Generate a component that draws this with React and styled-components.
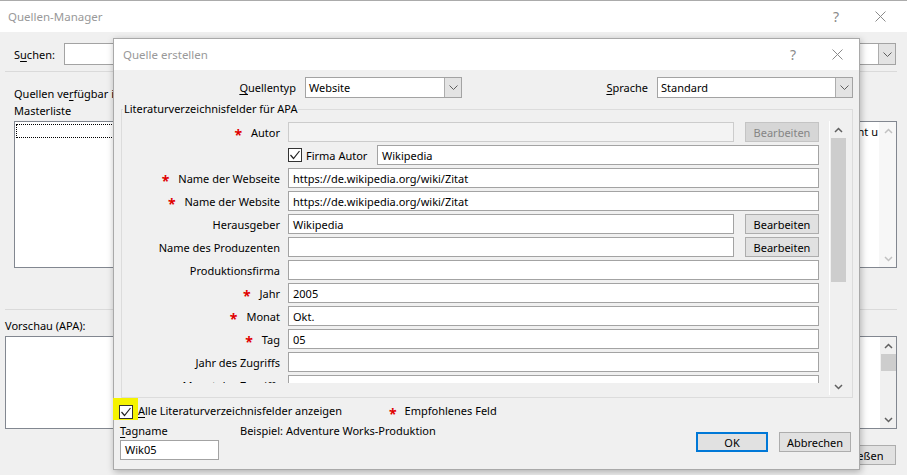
import styled, { createGlobalStyle } from 'styled-components';

const GlobalStyle = createGlobalStyle`
  * {
    box-sizing: border-box;
  }

  html, body {
    margin: 0;
    padding: 0;
    background: #f0f0f0;
    overflow: hidden;
  }

  body {
    font-family: "Noto Sans", "DejaVu Sans", sans-serif;
    font-size: 11px;
    color: #000;
  }
`;

const Desktop = styled.div`
  position: relative;
  width: 907px;
  height: 475px;
  overflow: hidden;
`;

// ---- window chrome ----

const TitleBar = styled.div`
  display: flex;
  align-items: center;
  height: 31px;
  padding: 0 ${(props) => props.$right}px 0 ${(props) => props.$inset}px;
  background: #fff;
`;

const WindowTitle = styled.div`
  flex: 1;
  font-size: 11.5px;
  color: #999;
`;

const CaptionButton = styled.div`
  display: flex;
  align-items: center;
  justify-content: center;
  width: 44px;
  height: 31px;
  font-size: 14px;
  color: #8a8a8a;
`;

function Caption({ title, inset, right }) {
  return (
    <TitleBar $inset={inset} $right={right}>
      <WindowTitle>{title}</WindowTitle>
      <CaptionButton>?</CaptionButton>
      <CaptionButton>
        <svg width="11" height="11" viewBox="0 0 11 11">
          <path d="M0.5 0.5 L10.5 10.5 M10.5 0.5 L0.5 10.5" stroke="#8a8a8a" strokeWidth="1" />
        </svg>
      </CaptionButton>
    </TitleBar>
  );
}

// ---- shared controls ----

const Key = styled.span`
  text-decoration: underline;
  text-underline-offset: 2px;
`;

const TextBox = styled.div`
  display: flex;
  align-items: center;
  flex: ${(props) => (props.$width ? 'none' : 1)};
  width: ${(props) => (props.$width ? `${props.$width}px` : 'auto')};
  height: ${(props) => props.$height || 20}px;
  padding: 0 4px;
  background: ${(props) => (props.$disabled ? '#f3f3f3' : '#fff')};
  border: 1px solid ${(props) => (props.$disabled ? '#cccccc' : '#a3a3a3')};
  white-space: nowrap;
  overflow: hidden;
`;

const PushButton = styled.div`
  display: flex;
  align-items: center;
  justify-content: center;
  flex: none;
  width: ${(props) => props.$width || 74}px;
  height: 20px;
  background: ${(props) => (props.$disabled ? '#d6d6d6' : '#e1e1e1')};
  border: ${(props) => (props.$default ? '2px solid #0078d7' : `1px solid ${props.$disabled ? '#c4c4c4' : '#adadad'}`)};
  color: ${(props) => (props.$disabled ? '#858585' : '#000')};
  white-space: nowrap;
`;

const EditButton = styled(PushButton)`
  margin-left: 11px;
`;

const ComboField = styled.div`
  display: flex;
  align-items: stretch;
  flex: ${(props) => (props.$width ? 'none' : 1)};
  width: ${(props) => (props.$width ? `${props.$width}px` : 'auto')};
  height: ${(props) => props.$height || 21}px;
  background: #fff;
  border: 1px solid #a3a3a3;
`;

const ComboText = styled.div`
  display: flex;
  align-items: center;
  flex: 1;
  padding-left: 3px;
`;

const ComboArrow = styled.div`
  display: flex;
  align-items: center;
  justify-content: center;
  width: 17px;
  background: #e3e3e3;
  border-left: 1px solid #adadad;
`;

function Chevron() {
  return (
    <svg width="9" height="5" viewBox="0 0 9 5">
      <polyline points="0.5,0.5 4.5,4.5 8.5,0.5" fill="none" stroke="#5d5d5d" strokeWidth="1" />
    </svg>
  );
}

function Combo({ value, width, height }) {
  return (
    <ComboField $width={width} $height={height}>
      <ComboText>{value}</ComboText>
      <ComboArrow>
        <Chevron />
      </ComboArrow>
    </ComboField>
  );
}

const CheckBox = styled.span`
  display: flex;
  align-items: center;
  justify-content: center;
  flex: none;
  width: 14px;
  height: 14px;
  background: #fff;
  border: 1px solid #333;
`;

function Checked() {
  return (
    <CheckBox>
      <svg width="12" height="12" viewBox="0 0 12 12">
        <polyline points="1.5,6 4.5,9.5 10.5,2" fill="none" stroke="#222" strokeWidth="1.2" />
      </svg>
    </CheckBox>
  );
}

const ScrollBar = styled.div`
  display: flex;
  flex-direction: column;
  align-items: center;
  flex: none;
  width: 17px;
  height: ${(props) => (props.$height ? `${props.$height}px` : 'auto')};
  background: ${(props) => (props.$disabled ? '#f7f7f7' : '#f0f0f0')};
  border-left: 1px solid ${(props) => (props.$disabled ? '#f7f7f7' : '#fff')};
`;

const ArrowCell = styled.div`
  display: flex;
  align-items: center;
  justify-content: center;
  width: 100%;
  height: 17px;
  flex: none;
`;

const Thumb = styled.div`
  width: 15px;
  height: ${(props) => props.$size}px;
  background: #cdcdcd;
  flex: none;
`;

const Track = styled.div`
  flex: 1;
`;

function Arrow({ down, light }) {
  return (
    <ArrowCell>
      <svg width="9" height="6" viewBox="0 0 9 6">
        <polyline
          points={down ? '1,1 4.5,4.5 8,1' : '1,5 4.5,1.5 8,5'}
          fill="none"
          stroke={light ? '#c2c2c2' : '#606060'}
          strokeWidth="1.5"
        />
      </svg>
    </ArrowCell>
  );
}

// ---- Quellen-Manager (background window) ----

const ManagerWindow = styled.div`
  display: flex;
  flex-direction: column;
  height: 475px;
  border-top: 1px solid #ababab;
`;

const ManagerBody = styled.div`
  display: flex;
  flex-direction: column;
  flex: 1;
  padding: 0 10px 0 5px;
`;

const SearchRow = styled.div`
  display: flex;
  align-items: center;
  margin-top: 11px;
  padding: 0 1px 0 9px;
`;

const SearchLabel = styled.div`
  width: 50px;
`;

const Divider = styled.div`
  height: 1px;
  margin-top: ${(props) => props.$gap}px;
  background: #dadada;
`;

const ListsArea = styled.div`
  display: grid;
  grid-template-columns: 1fr 1fr;
  grid-template-rows: 34px 147px;
  column-gap: 40px;
  row-gap: 2px;
  margin-top: 13px;
  padding-left: 9px;
  line-height: 17px;
`;

const ListBox = styled.div`
  display: flex;
  background: #fff;
  border: 1px solid #828790;
  overflow: hidden;
`;

const ListItems = styled.div`
  flex: 1;
  min-width: 0;
  padding: 2px 1px;
`;

const FocusItem = styled.div`
  height: 14px;
  border: 1px dotted #000;
`;

const SourceItem = styled.div`
  display: flex;
  justify-content: flex-end;
  white-space: nowrap;
  line-height: 16px;
`;

const PreviewLabel = styled.div`
  margin-top: 7px;
  line-height: 17px;
`;

const PreviewBox = styled.div`
  display: flex;
  justify-content: flex-end;
  height: 93px;
  margin-top: 2px;
  background: #fff;
  border: 1px solid #828790;
`;

const ManagerFooter = styled.div`
  display: flex;
  justify-content: flex-end;
  margin-top: 16px;
  padding-right: 1px;
`;

// ---- Quelle erstellen (dialog) ----

const Dialog = styled.div`
  position: absolute;
  left: 113px;
  top: 38px;
  display: flex;
  flex-direction: column;
  width: 747px;
  height: 432px;
  background: #f0f0f0;
  border: 1px solid #a9a9a9;
  box-shadow: 1px 2px 7px rgba(0, 0, 0, 0.28);
`;

const TopRow = styled.div`
  display: flex;
  align-items: center;
  margin-top: 7px;
  padding-right: 6px;
`;

const TopLabel = styled.div`
  width: ${(props) => props.$width}px;
  margin-right: 9px;
  text-align: right;
`;

const Spacer = styled.div`
  flex: 1;
`;

const FieldGroup = styled.fieldset`
  min-width: 0;
  margin: 3px 6px 0 7px;
  padding: 0 6px 2px 0;
  border: 1px solid #dcdcdc;
`;

const Legend = styled.legend`
  margin-left: 1px;
  padding: 0 1px;
  line-height: 16px;
`;

const PaneWrap = styled.div`
  display: flex;
  align-items: flex-start;
  margin-top: 4px;
`;

const RowsPane = styled.div`
  display: flex;
  flex-direction: column;
  gap: 3px;
  flex: 1;
  height: 262px;
  padding: 1px 10px 0 0;
  overflow: hidden;
`;

const FieldRow = styled.div`
  display: flex;
  align-items: center;
  flex: none;
  height: 20px;
`;

const FieldLabel = styled.div`
  display: flex;
  align-items: center;
  justify-content: flex-end;
  flex: none;
  width: 158px;
  margin-right: 8px;
  white-space: nowrap;
`;

const Star = styled.span`
  display: inline-flex;
  align-items: center;
  height: 16px;
  padding-top: 5px;
  margin-right: ${(props) => props.$gap || 9}px;
  color: #e00000;
  font-size: 14px;
  font-weight: 700;
  line-height: 16px;
`;

const InlineCheck = styled.label`
  display: flex;
  align-items: center;
  gap: 4px;
  flex: none;
  width: 89px;
`;

const CheckRow = styled.div`
  display: flex;
  align-items: flex-end;
  margin-left: -1px;
`;

const Highlight = styled.div`
  flex: none;
  padding: 7px 5px 1px 6px;
  background: #f5f300;
`;

const AllFields = styled.div`
  width: 251px;
  line-height: 16px;
  padding-bottom: 1px;
`;

const Hint = styled.div`
  display: flex;
  align-items: center;
  line-height: 16px;
  padding-bottom: 1px;
`;

const FooterRow = styled.div`
  display: flex;
  align-items: flex-start;
  padding: 3px 8px 0 6px;
`;

const TagColumn = styled.div`
  display: flex;
  flex-direction: column;
  gap: 1px;
  width: 120px;
  line-height: 16px;
`;

const Example = styled.div`
  line-height: 16px;
`;

const DialogButtons = styled.div`
  display: flex;
  gap: 11px;
  margin: 9px 0 0 auto;
`;

const fields = [
  { label: 'Name der Webseite', star: true, value: 'https://de.wikipedia.org/wiki/Zitat' },
  { label: 'Name der Website', star: true, value: 'https://de.wikipedia.org/wiki/Zitat' },
  { label: 'Herausgeber', value: 'Wikipedia', edit: true },
  { label: 'Name des Produzenten', value: '', edit: true },
  { label: 'Produktionsfirma', value: '' },
  { label: 'Jahr', star: true, value: '2005' },
  { label: 'Monat', star: true, value: 'Okt.' },
  { label: 'Tag', star: true, value: '05' },
  { label: 'Jahr des Zugriffs', value: '' },
  { label: 'Monat des Zugriffs', value: '' },
  { label: 'Tag des Zugriffs', value: '' },
];

function Field({ label, star, value, edit, disabled }) {
  return (
    <FieldRow>
      <FieldLabel>
        {star && <Star>*</Star>}
        {label}
      </FieldLabel>
      <TextBox $disabled={disabled}>{value}</TextBox>
      {edit && <EditButton $disabled={disabled}>Bearbeiten</EditButton>}
    </FieldRow>
  );
}

export default function App() {
  return (
    <Desktop>
      <GlobalStyle />
      <ManagerWindow>
        <Caption title="Quellen-Manager" inset={8} right={5} />
        <ManagerBody>
          <SearchRow>
            <SearchLabel>
              S<Key>u</Key>chen:
            </SearchLabel>
            <TextBox $width={400} $height={22} />
            <Spacer />
            <Combo value="" width={420} height={22} />
          </SearchRow>
          <Divider $gap={6} />
          <ListsArea>
            <div>
              Quellen ve<Key>r</Key>fügbar in:
              <br />
              Masterliste
            </div>
            <div>Aktuelle Liste</div>
            <ListBox>
              <ListItems>
                <FocusItem />
              </ListItems>
            </ListBox>
            <ListBox>
              <ListItems>
                <SourceItem>Wikipedia; Zitat (2005) – nicht u</SourceItem>
              </ListItems>
              <ScrollBar $disabled>
                <Arrow light />
                <Track />
                <Arrow down light />
              </ScrollBar>
            </ListBox>
          </ListsArea>
          <Divider $gap={41} />
          <PreviewLabel>Vorschau (APA):</PreviewLabel>
          <PreviewBox>
            <ScrollBar>
              <Arrow />
              <Thumb $size={17} />
              <Track />
              <Arrow down />
            </ScrollBar>
          </PreviewBox>
          <ManagerFooter>
            <PushButton $width={75}>Schließen</PushButton>
          </ManagerFooter>
        </ManagerBody>
      </ManagerWindow>

      <Dialog>
        <Caption title="Quelle erstellen" inset={9} right={0} />
        <TopRow>
          <TopLabel $width={182}>
            <Key>Q</Key>uellentyp
          </TopLabel>
          <Combo value="Website" width={157} />
          <Spacer />
          <TopLabel $width={42}>
            <Key>S</Key>prache
          </TopLabel>
          <Combo value="Standard" width={196} />
        </TopRow>

        <FieldGroup>
          <Legend>Literaturverzeichnisfelder für APA</Legend>
          <PaneWrap>
            <RowsPane>
              <Field label="Autor" star value="" edit disabled />
              <FieldRow>
                <FieldLabel />
                <InlineCheck>
                  <Checked />
                  Firma Autor
                </InlineCheck>
                <TextBox>Wikipedia</TextBox>
              </FieldRow>
              {fields.map((f) => (
                <Field key={f.label} {...f} />
              ))}
            </RowsPane>
            <ScrollBar $height={274}>
              <Arrow />
              <Thumb $size={144} />
              <Track />
              <Arrow down />
            </ScrollBar>
          </PaneWrap>
        </FieldGroup>

        <CheckRow>
          <Highlight>
            <Checked />
          </Highlight>
          <AllFields>
            <Key>A</Key>lle Literaturverzeichnisfelder anzeigen
          </AllFields>
          <Hint>
            <Star $gap={8}>*</Star>
            Empfohlenes Feld
          </Hint>
        </CheckRow>

        <FooterRow>
          <TagColumn>
            <div>
              <Key>T</Key>agname
            </div>
            <TextBox $width={99}>Wik05</TextBox>
          </TagColumn>
          <Example>Beispiel: Adventure Works-Produktion</Example>
          <DialogButtons>
            <PushButton $width={72} $default>OK</PushButton>
            <PushButton $width={72}>Abbrechen</PushButton>
          </DialogButtons>
        </FooterRow>
      </Dialog>
    </Desktop>
  );
}
